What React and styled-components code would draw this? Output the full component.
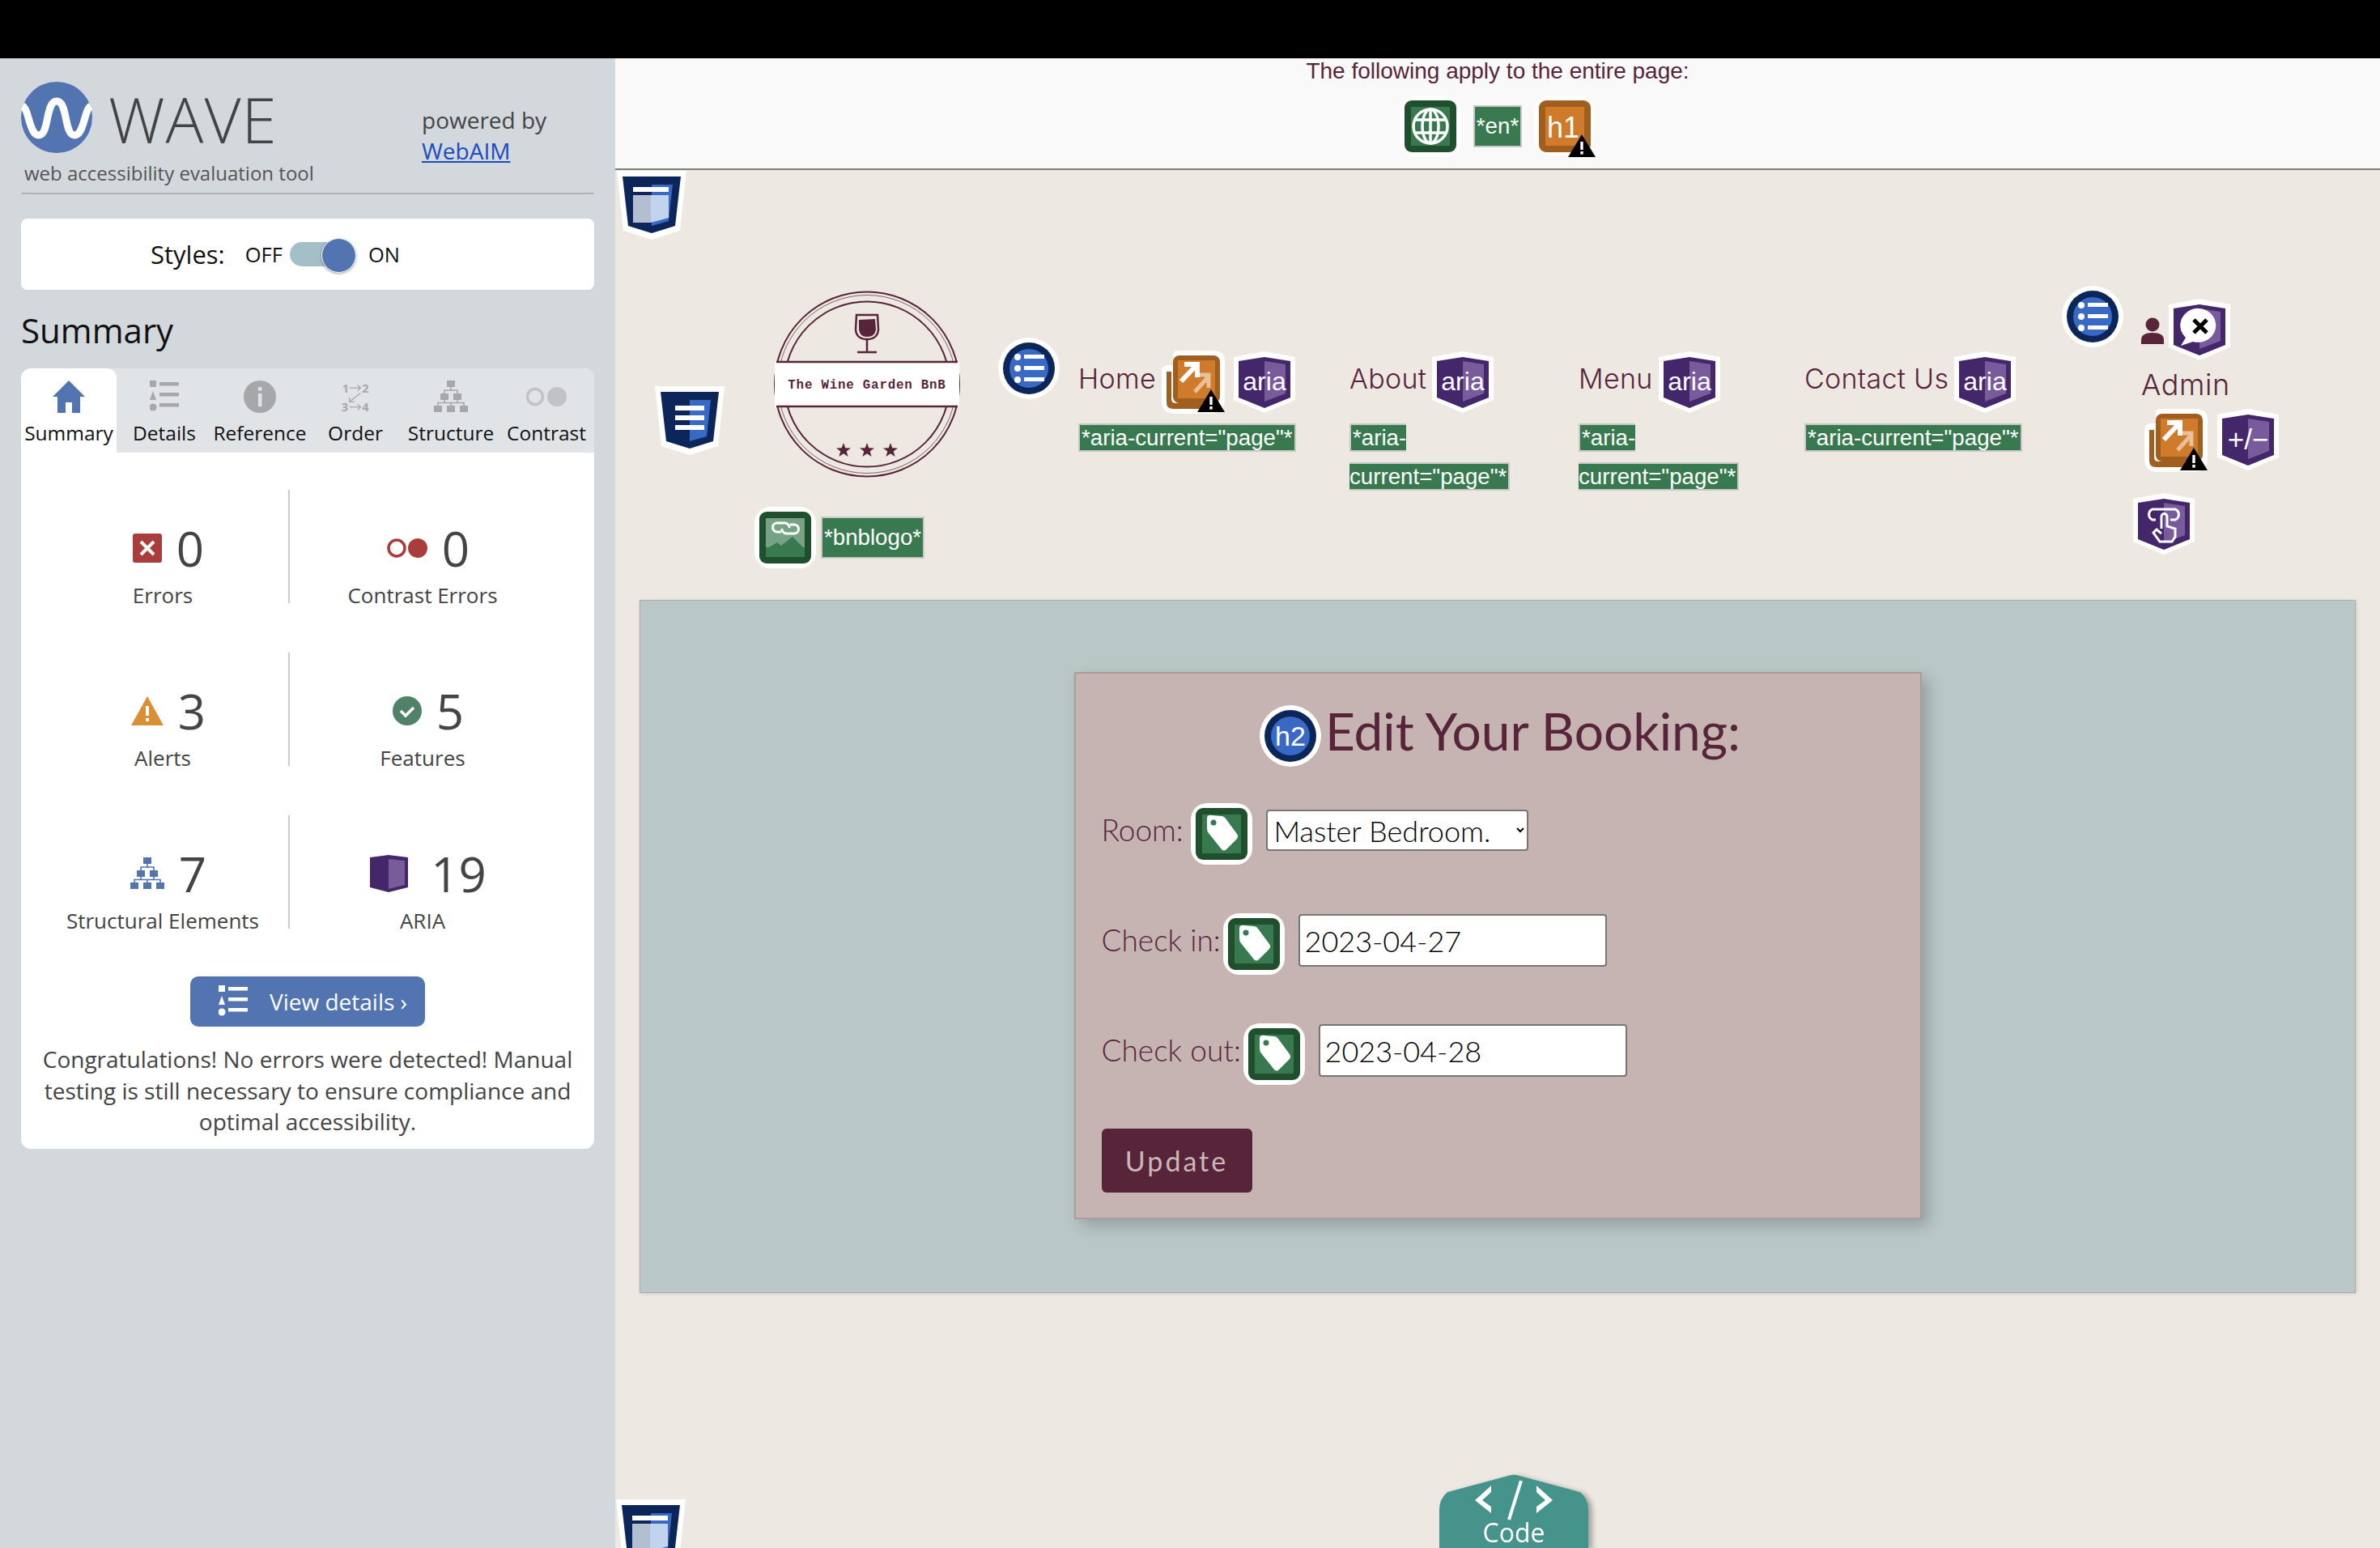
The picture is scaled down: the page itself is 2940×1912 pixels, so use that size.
import React from 'react';
import styled, {createGlobalStyle} from 'styled-components';

const GlobalStyle = createGlobalStyle`
	html, body {
		margin: 0;
		padding: 0;
		background: #000;
	}
	* {
		box-sizing: border-box;
	}
`;

const Screen = styled.div`
	width: 2940px;
	height: 1912px;
	padding-top: 72px;
	background: #000;
	display: flex;
	overflow: hidden;
`;

/* ---------- sidebar ---------- */

const Sidebar = styled.aside`
	width: 760px;
	flex-shrink: 0;
	background: #d3d8dc;
	padding: 0 26px;
	font-family: "Open Sans", sans-serif;
	color: #444;
`;

const SideHead = styled.header`
	height: 168px;
	padding-top: 29px;
	border-bottom: 2px solid #b1b5b8;
	display: flex;
`;

const Brand = styled.div`
	width: 495px;
`;

const BrandRow = styled.div`
	display: flex;
	align-items: center;
	gap: 20px;
	height: 88px;
`;

const BrandName = styled.div`
	padding-top: 4px;
	font-size: 78px;
	font-weight: 300;
	line-height: 88px;
	color: #444;
	letter-spacing: 1px;
`;

const BrandSub = styled.div`
	font-size: 24px;
	line-height: 30px;
	margin: 10px 0 0 4px;
	color: #555;
`;

const Powered = styled.div`
	margin-top: 28px;
	font-size: 28px;
	line-height: 38px;
	color: #444;

	a {
		color: #1a4bc0;
		display: block;
	}
`;

const StylesCard = styled.div`
	margin-top: 30px;
	height: 88px;
	background: #fff;
	border-radius: 8px;
	padding-left: 160px;
	display: flex;
	align-items: center;
	color: #111;
`;

const StylesLabel = styled.span`
	font-size: 31px;
	margin-right: 25px;
`;

const StylesState = styled.span`
	font-size: 25.5px;
`;

const Toggle = styled.div`
	position: relative;
	width: 62px;
	height: 30px;
	margin: 0 35px 0 9px;
	border-radius: 15px;
	background: #a5bfc9;

	&::after {
		content: '';
		position: absolute;
		right: -20px;
		top: -5px;
		width: 41px;
		height: 41px;
		border-radius: 50%;
		background: #5274b0;
		border: 1px solid #fff;
		box-shadow: 0 1px 3px rgba(0, 0, 0, .4);
	}
`;

const SummaryTitle = styled.h2`
	margin: 20px 0 17px;
	font-size: 42px;
	font-weight: 400;
	line-height: 60px;
	color: #111;
`;

const SummaryCard = styled.section`
	background: #fff;
	border-radius: 12px;
	overflow: hidden;
	padding-bottom: 14px;
`;

const Tabs = styled.div`
	height: 104px;
	display: grid;
	grid-template-columns: repeat(6, 118px);
	background: #e0e4e7;
`;

const Tab = styled.div`
	display: flex;
	flex-direction: column;
	align-items: center;
	padding-top: 15px;
	background: ${p => (p.$active ? '#fff' : 'transparent')};
	border-radius: ${p => (p.$active ? '12px 12px 0 0' : '0')};
	color: #111;
	font-size: 24.5px;
	white-space: nowrap;

	svg {
		height: 40px;
		display: block;
	}

	span {
		margin-top: 8px;
		line-height: 34px;
	}
`;

const StatGrid = styled.div`
	margin-top: 46px;
	padding-left: 20px;
	display: grid;
	grid-template-columns: 312px 328px;
	grid-auto-rows: 140px;
	row-gap: 61px;
`;

const Stat = styled.div`
	padding-top: 42px;
	display: flex;
	flex-direction: column;
	align-items: center;
	border-right: ${p => (p.$divider ? '2px solid #ccc' : 'none')};
`;

const StatTop = styled.div`
	height: 60px;
	padding-left: 14px;
	display: flex;
	align-items: center;
	gap: 18px;
	font-size: 60px;
	line-height: 60px;
	color: #444;
`;

const StatLabel = styled.div`
	margin-top: 10px;
	font-size: 26px;
	line-height: 36px;
	color: #444;
	white-space: nowrap;
`;

const DetailsButton = styled.button`
	display: flex;
	align-items: center;
	width: 290px;
	height: 62px;
	margin: 59px auto 0;
	padding: 0 0 0 35px;
	border: none;
	border-radius: 10px;
	background: #5274b0;
	color: #fff;
	font-family: "Open Sans", sans-serif;
	font-size: 28px;
	white-space: nowrap;

	svg {
		margin-right: 27px;
	}
`;

const Congrats = styled.p`
	margin: 21px 0 0;
	padding: 0 16px;
	text-align: center;
	font-size: 28px;
	line-height: 38.5px;
	color: #444;
`;

/* ---------- page ---------- */

const Main = styled.main`
	position: relative;
	flex: 1;
	background: #ede8e2;
	color: #58243a;
	overflow: hidden;
`;

const DocBar = styled.div`
	height: 138px;
	background: #f9f9f9;
	border-bottom: 2px solid #7d8070;
	text-align: center;
`;

const DocTitle = styled.div`
	font-family: "Liberation Sans", Arial, sans-serif;
	font-size: 28px;
	line-height: 32px;
`;

const DocIcons = styled.div`
	margin-top: 14px;
	display: flex;
	justify-content: center;
	align-items: center;
	gap: 15px;
`;

const Tag = styled.span`
	font-family: "Liberation Sans", Arial, sans-serif;
	font-size: 27.7px;
	line-height: 48px;
	color: #fff;
	background: #39794f;
	border: 2px solid #c8c8c8;
	padding: 0 2px;
`;

const Landmark = styled.div`
	margin: ${p => p.$margin};
	width: 86px;
	flex-shrink: 0;
	line-height: 0;
`;

const Header = styled.header`
	height: 445px;
	display: flex;
	align-items: flex-start;
`;

const BrandColumn = styled.div`
	width: 254px;
	margin-left: 37px;
	flex-shrink: 0;
`;

const Logo = styled.div`
	margin: 63px 0 0 24px;
	line-height: 0;
`;

const LogoAlt = styled.div`
	margin-top: 36px;
	display: flex;
	align-items: center;
	gap: 6px;
`;

const NavIcon = styled.div`
	margin: ${p => p.$margin};
	flex-shrink: 0;
	line-height: 0;
`;

const Nav = styled.nav`
	margin: 137px 0 0 23px;
	display: grid;
	grid-template-columns: 335px 283px 279px 318px;
	flex-shrink: 0;
`;

const NavItem = styled.div`
	display: flex;
	flex-direction: column;
`;

const NavHead = styled.div`
	display: flex;
	align-items: center;
	height: 77px;
	gap: 7px;
`;

const NavLabel = styled.span`
	padding-bottom: 8px;
	font-family: Inter, sans-serif;
	font-size: 34px;
	font-weight: 300;
	letter-spacing: .3px;
	white-space: nowrap;
`;

const LinkSlot = styled.div`
	margin-right: 4px;
	line-height: 0;
`;

const NavNote = styled.div`
	max-width: ${p => (p.$narrow ? '215px' : 'none')};
	margin-top: 7px;
	font-family: "Liberation Sans", Arial, sans-serif;
	font-size: 27.7px;
	line-height: 48px;
	white-space: ${p => (p.$narrow ? 'normal' : 'nowrap')};
`;

const AdminColumn = styled.div`
	margin: 73px 0 0 22px;
	width: 190px;
	flex-shrink: 0;
`;

const AdminTop = styled.div`
	display: flex;
	align-items: flex-start;
	gap: 6px;
`;

const UserSlot = styled.div`
	margin-top: 23px;
	line-height: 0;
`;

const AdminLabel = styled(NavLabel)`
	display: block;
	margin-top: 9px;
	padding-bottom: 0;
	font-size: 36px;
	letter-spacing: .6px;
	line-height: 42px;
`;

const AdminIcons = styled.div`
	margin: 9px 0 0 4px;
	display: flex;
	gap: 12px;
`;

const TouchIcon = styled.div`
	margin: 26px 0 0 -10px;
	line-height: 0;
`;

const Panel = styled.section`
	height: 856px;
	margin: 0 30px;
	padding-top: 88px;
	background: #b9c7c7;
	border: 1px solid #a3aeae;
	box-shadow: 1px 1px 4px rgba(0, 0, 0, .15);
`;

const BookingCard = styled.div`
	width: 1047px;
	height: 676px;
	margin: 0 auto;
	padding: 39px 32px 0;
	background: #c5b4b2;
	border: 2px solid #aa9c9c;
	box-shadow: 8px 8px 18px rgba(0, 0, 0, .2);
	font-family: Lato, sans-serif;
`;

const BookingTitle = styled.h2`
	margin: 0 0 45px;
	padding-left: 6px;
	display: flex;
	justify-content: center;
	align-items: center;
	gap: 5px;
	height: 76px;
	font-size: 64px;
	font-weight: 400;
	line-height: 76px;

	span {
		padding-bottom: 12px;
	}
`;

const FormRow = styled.div`
	display: flex;
	align-items: flex-start;
	height: 76px;
	margin-bottom: 60px;
`;

const FieldLabel = styled.label`
	width: ${p => p.$width}px;
	font-size: 37px;
	font-weight: 300;
	line-height: 66px;
	white-space: nowrap;
`;

const FieldIcon = styled.div`
	line-height: 0;
	margin-right: 17px;
`;

const RoomSelect = styled.select`
	width: 324px;
	height: 51px;
	margin-top: 8px;
	padding: 0 4px;
	background: #fff;
	color: #000;
	border: 2px solid #767676;
	border-radius: 4px;
	font-family: Lato, sans-serif;
	font-size: 36px;
	font-weight: 300;
`;

const DateInput = styled.input`
	width: 381px;
	height: 65px;
	margin-top: 1px;
	padding: 0 6px;
	background: #fff;
	color: #000;
	border: 2px solid #767676;
	border-radius: 4px;
	font-family: Lato, sans-serif;
	font-size: 36px;
	font-weight: 300;
`;

const UpdateButton = styled.button`
	width: 186px;
	height: 79px;
	margin-top: -6px;
	border: none;
	border-radius: 6px;
	background: #58243a;
	color: #c9b8b6;
	font-family: Lato, sans-serif;
	font-size: 34px;
	letter-spacing: 3px;
`;

const CodeTab = styled.div`
	position: absolute;
	left: 1018px;
	bottom: 0;
	width: 184px;
	height: 91px;
	color: #fff;
	font-family: "Open Sans", sans-serif;
	font-size: 32px;
	text-align: center;
	filter: drop-shadow(5px 2px 3px rgba(0, 0, 0, .3));

	svg {
		position: absolute;
		left: 0;
		top: 0;
	}

	span {
		position: absolute;
		left: 0;
		right: 0;
		top: 54px;
		line-height: 36px;
	}
`;

/* ---------- icons ---------- */

const IconText = styled.text`
	font-family: "Liberation Sans", Arial, sans-serif;
	fill: #fff;
	text-anchor: middle;
`;

const LogoText = styled.text`
	font-family: "Liberation Mono", monospace;
	font-weight: 700;
	font-size: 15.8px;
	letter-spacing: .8px;
	fill: #58243a;
	text-anchor: middle;
`;

const Warn = ({x = 44, y = 48}) => (
	<g transform={`translate(${x} ${y})`}>
		<path d="M17 0 L34 28 H0 Z" fill="#000" />
		<rect x="15.3" y="9" width="3.4" height="10" fill="#fff" />
		<rect x="15.3" y="21" width="3.4" height="3.6" fill="#fff" />
	</g>
);

const GreenBox = ({children}) => (
	<svg width="76" height="76" viewBox="0 0 76 76">
		<rect x="0" y="0" width="76" height="76" rx="20" fill="#fff" />
		<rect x="6" y="6" width="64" height="64" rx="9" fill="#1f4f2d" />
		<rect x="14" y="14" width="48" height="48" fill="#39794f" />
		{children}
	</svg>
);

const GlobeIcon = () => (
	<GreenBox>
		<g fill="none" stroke="#fff" strokeWidth="3.5">
			<circle cx="38" cy="38" r="21" />
			<ellipse cx="38" cy="38" rx="10" ry="21" />
			<path d="M38 17 V59 M19 30 H57 M19 46 H57" />
		</g>
	</GreenBox>
);

const TagIcon = () => (
	<GreenBox>
		<path d="M20 19 Q20 14 26 15 L38 16 Q41 16 43 19 L57 38 Q59 41 57 44 L44 57 Q41 60 38 57 L22 37 Q20 35 20 31 Z" fill="#fff" />
		<circle cx="28" cy="24" r="3.5" fill="#39794f" />
	</GreenBox>
);

const LinkedImageIcon = () => (
	<GreenBox>
		<rect x="14" y="14" width="48" height="36" fill="#76a384" />
		<path d="M14 62 V52 L28 44 L33 48 L47 37 L62 52 V62 Z" fill="#39794f" />
		<g fill="none" stroke="#fff" strokeWidth="3">
			<path d="M33 31 H28 A5.5 5.5 0 0 1 28 20 H38 A5.5 5.5 0 0 1 43 26" />
			<path d="M44 22 H49 A5.5 5.5 0 0 1 49 33 H39 A5.5 5.5 0 0 1 34 27" />
		</g>
	</GreenBox>
);

const HeadingBox = () => (
	<svg width="76" height="76" viewBox="0 0 76 76">
		<rect width="74" height="74" rx="20" fill="#fff" />
		<rect x="6" y="6" width="64" height="64" rx="9" fill="#a05f1f" />
		<rect x="14" y="14" width="48" height="48" fill="#cf7b2b" />
		<IconText x="36" y="52" fontSize="36">h1</IconText>
		<Warn x={42} y={48} />
	</svg>
);

const LinkWarn = () => (
	<svg width="78" height="78" viewBox="0 0 78 78">
		<path d="M0 26 Q0 18 8 18 H14 V6 Q14 0 20 0 H64 Q78 0 78 14 V60 Q78 78 60 78 H16 Q0 78 0 62 Z" fill="#fff" />
		<path d="M6 26 V64 Q6 72 14 72 H50 V65 H18 Q12 65 12 60 V26 Z" fill="#a05f1f" />
		<rect x="14" y="6" width="58" height="59" rx="8" fill="#a05f1f" />
		<rect x="20" y="12" width="46" height="47" fill="#cf7b2b" />
		<path d="M44 30 H58 V46 M58 32 L41 51" fill="none" stroke="#e8c19b" strokeWidth="5" />
		<path d="M28 17 H44 V33 M43 18 L24 38" fill="none" stroke="#fff" strokeWidth="6" />
		<Warn />
	</svg>
);

const PurpleShield = ({children}) => (
	<svg width="76" height="76" viewBox="0 0 76 76">
		<path d="M0 7 L38 0 L76 7 V60 L38 76 L0 60 Z" fill="#fff" />
		<path d="M6 12 L38 7 L70 12 V57 L38 70 L6 57 Z" fill="#43276a" />
		<path d="M38 12 L64 16 V52 L38 62 Z" fill="#775b9a" />
		{children}
	</svg>
);

const AriaIcon = () => (
	<PurpleShield>
		<IconText x="38" y="48" fontSize="32">aria</IconText>
	</PurpleShield>
);

const PlusMinusIcon = () => (
	<PurpleShield>
		<IconText x="38" y="50" fontSize="35">+/−</IconText>
	</PurpleShield>
);

const AlertBubbleIcon = () => (
	<PurpleShield>
		<path d="M15 58 L21 48 A22 21 0 1 1 30 53 Z" fill="#fff" />
		<path d="M31 26 L47 42 M47 26 L31 42" stroke="#000" strokeWidth="5" />
	</PurpleShield>
);

const TouchShield = () => (
	<PurpleShield>
		<path d="M28 33 H24 A7 7 0 0 1 24 20 H52 A7 7 0 0 1 52 33 H46" fill="none" stroke="#fff" strokeWidth="3" />
		<path d="M35 44 V29 A3.5 3.5 0 0 1 42 29 V41 L52 44 V54 L48 60 H33 L25 49 L29 45 L35 50" fill="none" stroke="#fff" strokeWidth="3" />
	</PurpleShield>
);

const BlueCircle = ({children}) => (
	<svg width="76" height="76" viewBox="0 0 76 76">
		<circle cx="38" cy="38" r="38" fill="#fff" />
		<circle cx="38" cy="38" r="32" fill="#0d2659" />
		<circle cx="38" cy="38" r="24" fill="#3769c5" />
		{children}
	</svg>
);

const ListCircle = () => (
	<BlueCircle>
		<g fill="#fff">
			<circle cx="24" cy="24" r="4" />
			<circle cx="24" cy="38" r="4" />
			<circle cx="24" cy="52" r="4" />
			<rect x="32" y="21" width="25" height="5" />
			<rect x="32" y="35" width="25" height="5" />
			<rect x="32" y="49" width="25" height="5" />
		</g>
	</BlueCircle>
);

const BlueShield = ({children}) => (
	<svg width="86" height="85" viewBox="0 0 86 85">
		<path d="M0 0 H86 L78 74 L43 85 L8 74 Z" fill="#fff" />
		<path d="M7 7 H79 L72 68 L43 77 L14 68 Z" fill="#0d2659" />
		<path d="M43 17 H69 L64 62 L43 68 Z" fill="#3769c5" />
		{children}
	</svg>
);

const PageShield = () => (
	<BlueShield>
		<rect x="20" y="20" width="44" height="6" fill="#fff" />
		<rect x="20" y="30" width="22" height="34" fill="#b4bed1" />
		<path d="M42 30 H64 V58 L42 64 Z" fill="#c2d3ee" />
	</BlueShield>
);

const HeaderShield = () => (
	<BlueShield>
		<rect x="25" y="24" width="36" height="6" fill="#fff" />
		<rect x="25" y="36" width="36" height="6" fill="#fff" />
		<rect x="25" y="48" width="36" height="6" fill="#fff" />
	</BlueShield>
);

const UserGlyph = () => (
	<svg width="28" height="33" viewBox="0 0 28 33">
		<circle cx="14" cy="9" r="8.5" fill="#58243a" />
		<path d="M0 33 V28 Q0 19 14 19 Q28 19 28 28 V33 Z" fill="#58243a" />
	</svg>
);

const BnbLogo = () => (
	<svg width="230" height="231" viewBox="0 0 230 231">
		<g fill="none" stroke="#58243a">
			<circle cx="115" cy="115.5" r="114" strokeWidth="2" />
			<circle cx="115" cy="115.5" r="110" strokeWidth=".7" />
			<circle cx="115" cy="115.5" r="102" strokeWidth="2" />
		</g>
		<rect x="1" y="88" width="228" height="56" fill="#fff" />
		<path d="M3 88 H227 M3 143 H227" stroke="#58243a" strokeWidth="2.5" />
		<LogoText x="115" y="121">The Wine Garden BnB</LogoText>
		<path d="M102 30 H128 L129 48 Q128 60 115 60 Q102 60 101 48 Z" fill="none" stroke="#58243a" strokeWidth="2.5" />
		<path d="M105 36 L125 35 L126 48 Q125 57 115 57 Q106 57 105 48 Z" fill="#58243a" />
		<path d="M115 60 V75 M103 76 H127" stroke="#58243a" strokeWidth="2.5" />
		<g fill="#58243a">
			<path d="M86 188 l2.3 6.2 6.7 .2 -5.3 4.1 1.9 6.4 -5.6 -3.7 -5.6 3.7 1.9 -6.4 -5.3 -4.1 6.7 -.2 Z" />
			<path d="M115 188 l2.3 6.2 6.7 .2 -5.3 4.1 1.9 6.4 -5.6 -3.7 -5.6 3.7 1.9 -6.4 -5.3 -4.1 6.7 -.2 Z" />
			<path d="M144 188 l2.3 6.2 6.7 .2 -5.3 4.1 1.9 6.4 -5.6 -3.7 -5.6 3.7 1.9 -6.4 -5.3 -4.1 6.7 -.2 Z" />
		</g>
	</svg>
);

const WaveMark = () => (
	<svg width="88" height="88" viewBox="0 0 88 88">
		<circle cx="44" cy="44" r="44" fill="#5274b0" />
		<path d="M2 30 C10 34 10 66 22 66 C35 66 30 24 44 24 C58 24 53 66 66 66 C78 66 78 34 86 30" fill="none" stroke="#fff" strokeWidth="9" />
	</svg>
);

const HomeGlyph = () => (
	<svg width="40" height="40" viewBox="0 0 40 40">
		<path d="M20 0 L40 20 H34 V40 H24 V27 H16 V40 H6 V20 H0 Z" fill="#5274b0" />
	</svg>
);

const ListGlyph = ({color = '#a5a7a9', width = 36}) => (
	<svg width={width} height="40" viewBox="0 0 36 40">
		<g fill={color}>
			<rect x="0" y="0" width="8" height="8" />
			<path d="M4 13 L8 24 H0 Z" />
			<circle cx="4" cy="33" r="4.5" />
			<rect x="12" y="2" width="24" height="4.5" />
			<rect x="12" y="15" width="24" height="4.5" />
			<rect x="12" y="28" width="24" height="4.5" />
		</g>
	</svg>
);

const InfoGlyph = () => (
	<svg width="40" height="40" viewBox="0 0 40 40">
		<circle cx="20" cy="20" r="20" fill="#a5a7a9" />
		<rect x="18" y="8" width="4.5" height="4.5" fill="#e0e4e7" />
		<rect x="18" y="16" width="4.5" height="16" fill="#e0e4e7" />
	</svg>
);

const OrderGlyph = () => (
	<svg width="40" height="40" viewBox="-1 -2 40 44" overflow="visible">
		<g fill="#a5a7a9" fontFamily="Open Sans, sans-serif" fontWeight="700" fontSize="16">
			<text x="1" y="14">1</text>
			<text x="28" y="14">2</text>
			<text x="0" y="40">3</text>
			<text x="28" y="40">4</text>
		</g>
		<path d="M11 8 H26 M22 4 L26 8 L22 12 M11 34 H26 M22 30 L26 34 L22 38 M26 15 L11 27 M11 21 V27 H18" fill="none" stroke="#a5a7a9" strokeWidth="1.4" />
	</svg>
);

const TreeGlyph = ({color = '#a5a7a9', width = 42}) => (
	<svg width={width} height="40" viewBox="0 0 42 40">
		<g fill={color}>
			<rect x="16" y="0" width="10" height="8" />
			<rect x="8" y="16" width="10" height="8" />
			<rect x="24" y="16" width="10" height="8" />
			<rect x="0" y="31" width="10" height="8" />
			<rect x="16" y="31" width="10" height="8" />
			<rect x="32" y="31" width="10" height="8" />
		</g>
		<path d="M21 8 V13 M13 16 V12 H29 V16 M13 24 V28 M5 31 V27.5 H37 V31 M21 28 V31 M29 24 V28" fill="none" stroke={color} strokeWidth="1.6" />
	</svg>
);

const PairGlyph = () => (
	<svg width="50" height="40" viewBox="0 0 50 40">
		<circle cx="11" cy="20" r="9.5" fill="none" stroke="#c0c2c4" strokeWidth="3.5" />
		<circle cx="38" cy="20" r="12" fill="#c0c2c4" />
	</svg>
);

const ErrorGlyph = () => (
	<svg width="36" height="36" viewBox="0 0 36 36">
		<rect width="36" height="36" rx="3" fill="#ab3c3c" />
		<path d="M10 10 L26 26 M26 10 L10 26" stroke="#fff" strokeWidth="4" />
	</svg>
);

const ContrastGlyph = () => (
	<svg width="50" height="24" viewBox="0 0 50 24">
		<circle cx="12" cy="12" r="10" fill="none" stroke="#ab3c3c" strokeWidth="3.5" />
		<circle cx="38" cy="12" r="12" fill="#ab3c3c" />
	</svg>
);

const AlertGlyph = () => (
	<svg width="40" height="36" viewBox="0 0 40 36">
		<path d="M20 0 L40 36 H0 Z" fill="#d98f35" />
		<rect x="18" y="12" width="4" height="12" fill="#fff" />
		<rect x="18" y="27" width="4" height="4" fill="#fff" />
	</svg>
);

const FeatureGlyph = () => (
	<svg width="36" height="36" viewBox="0 0 36 36">
		<circle cx="18" cy="18" r="18" fill="#4f8267" />
		<path d="M10 18 L16 24 L26 14" fill="none" stroke="#fff" strokeWidth="3.5" />
	</svg>
);

const AriaGlyph = () => (
	<svg width="57" height="46" viewBox="0 0 57 46">
		<path d="M0 3 L23 0 L47 3 V40 L23 46 L0 40 Z" fill="#43276a" />
		<path d="M23 5 L43 7 V37 L23 42 Z" fill="#775b9a" />
	</svg>
);

const CodeShape = () => (
	<svg width="184" height="91" viewBox="0 0 184 91">
		<path d="M0 91 V44 Q0 30 10 22 L88 1 Q92 0 96 1 L174 22 Q184 30 184 44 V91 Z" fill="#46938b" />
		<path d="M64 14 L44 32 L64 48 V40 L53 32 L64 22 Z M120 14 L140 32 L120 48 V40 L131 32 L120 22 Z" fill="#fff" />
		<path d="M101 8 L86 56" fill="none" stroke="#fff" strokeWidth="4" />
	</svg>
);

/* ---------- data ---------- */

const tabs = [
	{label: 'Summary', icon: <HomeGlyph />, active: true},
	{label: 'Details', icon: <ListGlyph />},
	{label: 'Reference', icon: <InfoGlyph />},
	{label: 'Order', icon: <OrderGlyph />},
	{label: 'Structure', icon: <TreeGlyph />},
	{label: 'Contrast', icon: <PairGlyph />},
];

const stats = [
	{label: 'Errors', value: 0, icon: <ErrorGlyph />},
	{label: 'Contrast Errors', value: 0, icon: <ContrastGlyph />},
	{label: 'Alerts', value: 3, icon: <AlertGlyph />},
	{label: 'Features', value: 5, icon: <FeatureGlyph />},
	{label: 'Structural Elements', value: 7, icon: <TreeGlyph color="#5274b0" />},
	{label: 'ARIA', value: 19, icon: <AriaGlyph />},
];

const navLinks = [
	{label: 'Home', warn: true},
	{label: 'About', narrow: true},
	{label: 'Menu', narrow: true},
	{label: 'Contact Us'},
];

function App() {
	return (
		<Screen>
			<GlobalStyle />

			<Sidebar>
				<SideHead>
					<Brand>
						<BrandRow>
							<WaveMark />
							<BrandName>WAVE</BrandName>
						</BrandRow>
						<BrandSub>web accessibility evaluation tool</BrandSub>
					</Brand>
					<Powered>
						powered by
						<a href="#webaim">WebAIM</a>
					</Powered>
				</SideHead>

				<StylesCard>
					<StylesLabel>Styles:</StylesLabel>
					<StylesState>OFF</StylesState>
					<Toggle />
					<StylesState>ON</StylesState>
				</StylesCard>

				<SummaryTitle>Summary</SummaryTitle>

				<SummaryCard>
					<Tabs>
						{tabs.map(t => (
							<Tab key={t.label} $active={t.active}>
								{t.icon}
								<span>{t.label}</span>
							</Tab>
						))}
					</Tabs>

					<StatGrid>
						{stats.map((s, i) => (
							<Stat key={s.label} $divider={i % 2 === 0}>
								<StatTop>
									{s.icon}
									{s.value}
								</StatTop>
								<StatLabel>{s.label}</StatLabel>
							</Stat>
						))}
					</StatGrid>

					<DetailsButton>
						<ListGlyph color="#fff" />
						View details ›
					</DetailsButton>

					<Congrats>
						Congratulations! No errors were detected! Manual testing is still necessary to ensure compliance and optimal accessibility.
					</Congrats>
				</SummaryCard>
			</Sidebar>

			<Main>
				<DocBar>
					<DocTitle>The following apply to the entire page:</DocTitle>
					<DocIcons>
						<GlobeIcon />
						<Tag>*en*</Tag>
						<HeadingBox />
					</DocIcons>
				</DocBar>

				<Landmark $margin="1px 0 0 2px">
					<PageShield />
				</Landmark>

				<Header>
					<Landmark $margin="181px 0 0 49px">
						<HeaderShield />
					</Landmark>

					<BrandColumn>
						<Logo>
							<BnbLogo />
						</Logo>
						<LogoAlt>
							<LinkedImageIcon />
							<Tag>*bnblogo*</Tag>
						</LogoAlt>
					</BrandColumn>

					<NavIcon $margin="121px 0 0 47px">
						<ListCircle />
					</NavIcon>

					<Nav>
						{navLinks.map(l => (
							<NavItem key={l.label}>
								<NavHead>
									<NavLabel>{l.label}</NavLabel>
									{l.warn && <LinkSlot><LinkWarn /></LinkSlot>}
									<AriaIcon />
								</NavHead>
								<NavNote $narrow={l.narrow}>
									<Tag>*aria-current="page"*</Tag>
								</NavNote>
							</NavItem>
						))}
					</Nav>

					<NavIcon $margin="57px 0 0 0">
						<ListCircle />
					</NavIcon>

					<AdminColumn>
						<AdminTop>
							<UserSlot>
								<UserGlyph />
							</UserSlot>
							<AlertBubbleIcon />
						</AdminTop>
						<AdminLabel>Admin</AdminLabel>
						<AdminIcons>
							<LinkWarn />
							<PlusMinusIcon />
						</AdminIcons>
						<TouchIcon>
							<TouchShield />
						</TouchIcon>
					</AdminColumn>
				</Header>

				<Panel>
					<BookingCard>
						<BookingTitle>
							<BlueCircle>
								<IconText x="38" y="50" fontSize="34">h2</IconText>
							</BlueCircle>
							<span>Edit Your Booking:</span>
						</BookingTitle>

						<FormRow>
							<FieldLabel $width={110}>Room:</FieldLabel>
							<FieldIcon><TagIcon /></FieldIcon>
							<RoomSelect defaultValue="master">
								<option value="master">Master Bedroom.</option>
							</RoomSelect>
						</FormRow>

						<FormRow>
							<FieldLabel $width={150}>Check in:</FieldLabel>
							<FieldIcon><TagIcon /></FieldIcon>
							<DateInput defaultValue="2023-04-27" />
						</FormRow>

						<FormRow>
							<FieldLabel $width={175}>Check out:</FieldLabel>
							<FieldIcon><TagIcon /></FieldIcon>
							<DateInput defaultValue="2023-04-28" />
						</FormRow>

						<UpdateButton>Update</UpdateButton>
					</BookingCard>
				</Panel>

				<Landmark $margin="255px 0 0 1px">
					<PageShield />
				</Landmark>

				<CodeTab>
					<CodeShape />
					<span>Code</span>
				</CodeTab>
			</Main>
		</Screen>
	);
}

export default App;
